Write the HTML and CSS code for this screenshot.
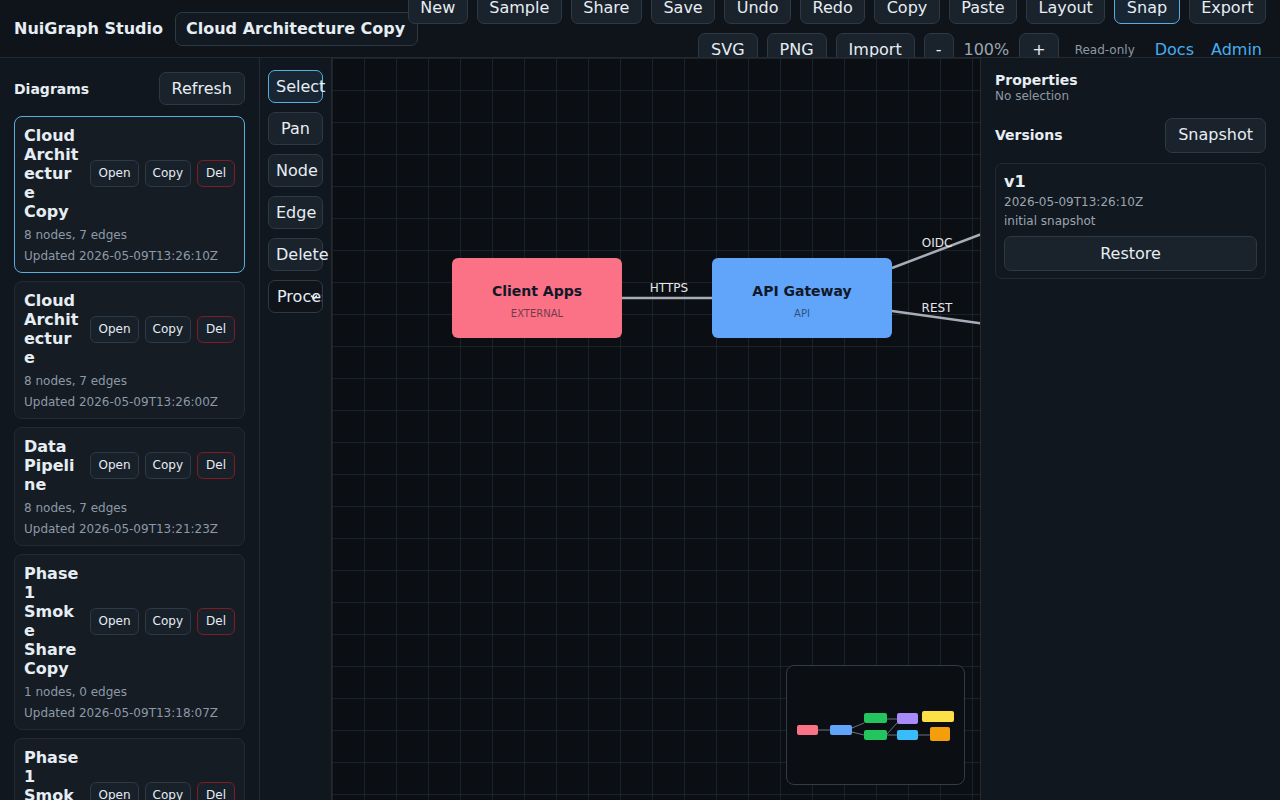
FILE: index.html
```html
<!DOCTYPE html>
<html lang="en">
<head>
<meta charset="utf-8">
<title>NuiGraph Studio</title>
<link rel="stylesheet" href="styles.css">
</head>
<body>
<header class="topbar">
  <div class="brand">NuiGraph Studio</div>
  <input class="title-input" type="text" value="Cloud Architecture Copy">
  <div class="toolbar">
    <div class="tb-row tb-main">
      <button class="btn">New</button>
      <button class="btn">Sample</button>
      <button class="btn">Share</button>
      <button class="btn">Save</button>
      <button class="btn">Undo</button>
      <button class="btn">Redo</button>
      <button class="btn">Copy</button>
      <button class="btn">Paste</button>
      <button class="btn">Layout</button>
      <button class="btn active">Snap</button>
      <button class="btn">Export</button>
    </div>
    <div class="tb-row">
      <button class="btn">SVG</button>
      <button class="btn">PNG</button>
      <button class="btn">Import</button>
      <button class="btn btn-zoom">-</button>
      <span class="zoom-val">100%</span>
      <button class="btn">+</button>
      <span class="readonly">Read-only</span>
      <a class="link link-docs">Docs</a>
      <a class="link">Admin</a>
    </div>
  </div>
</header>

<main class="workspace">
  <aside class="sidebar">
    <div class="side-head">
      <div class="side-title">Diagrams</div>
      <button class="btn">Refresh</button>
    </div>
    <div class="card-list">
      <div class="dcard selected">
        <div class="dcard-top">
          <div class="dcard-name">Cloud Architecture Copy</div>
          <div class="dcard-actions">
            <button class="sbtn">Open</button><button class="sbtn">Copy</button><button class="sbtn del">Del</button>
          </div>
        </div>
        <div class="meta">8 nodes, 7 edges</div>
        <div class="meta">Updated 2026-05-09T13:26:10Z</div>
      </div>
      <div class="dcard">
        <div class="dcard-top">
          <div class="dcard-name">Cloud Architecture</div>
          <div class="dcard-actions">
            <button class="sbtn">Open</button><button class="sbtn">Copy</button><button class="sbtn del">Del</button>
          </div>
        </div>
        <div class="meta">8 nodes, 7 edges</div>
        <div class="meta">Updated 2026-05-09T13:26:00Z</div>
      </div>
      <div class="dcard">
        <div class="dcard-top">
          <div class="dcard-name">Data Pipeline</div>
          <div class="dcard-actions">
            <button class="sbtn">Open</button><button class="sbtn">Copy</button><button class="sbtn del">Del</button>
          </div>
        </div>
        <div class="meta">8 nodes, 7 edges</div>
        <div class="meta">Updated 2026-05-09T13:21:23Z</div>
      </div>
      <div class="dcard">
        <div class="dcard-top">
          <div class="dcard-name">Phase 1 Smoke Share Copy</div>
          <div class="dcard-actions">
            <button class="sbtn">Open</button><button class="sbtn">Copy</button><button class="sbtn del">Del</button>
          </div>
        </div>
        <div class="meta">1 nodes, 0 edges</div>
        <div class="meta">Updated 2026-05-09T13:18:07Z</div>
      </div>
      <div class="dcard">
        <div class="dcard-top">
          <div class="dcard-name">Phase 1 Smoke Share</div>
          <div class="dcard-actions">
            <button class="sbtn">Open</button><button class="sbtn">Copy</button><button class="sbtn del">Del</button>
          </div>
        </div>
        <div class="meta">1 nodes, 0 edges</div>
        <div class="meta">Updated 2026-05-09T13:17:40Z</div>
      </div>
    </div>
  </aside>

  <nav class="tools">
    <button class="btn tool active">Select</button>
    <button class="btn tool">Pan</button>
    <button class="btn tool">Node</button>
    <button class="btn tool">Edge</button>
    <button class="btn tool">Delete</button>
    <div class="tool-select">
      <span class="tool-select-text">Process</span>
      <svg class="chev" width="8" height="6" viewBox="0 0 8 6"><path d="M1 1.5 L4 4.5 L7 1.5" fill="none" stroke="#e6edf3" stroke-width="1.6"/></svg>
    </div>
  </nav>

  <section class="canvas">
    <svg class="edges" width="648" height="742" viewBox="0 0 648 742">
      <g stroke="#a7adb7" stroke-width="2.5" fill="none">
        <line x1="290" y1="240" x2="380" y2="240"/>
        <line x1="560" y1="210" x2="660" y2="172"/>
        <line x1="560" y1="253" x2="660" y2="267"/>
      </g>
      <g fill="#e5e7eb" font-family="DejaVu Sans, sans-serif" font-size="12" text-anchor="middle">
        <text x="337" y="234">HTTPS</text>
        <text x="605" y="189">OIDC</text>
        <text x="605" y="254">REST</text>
      </g>
    </svg>
    <div class="node node-client">
      <div class="node-title">Client Apps</div>
      <div class="node-sub">EXTERNAL</div>
    </div>
    <div class="node node-api">
      <div class="node-title">API Gateway</div>
      <div class="node-sub">API</div>
    </div>
    <div class="minimap">
      <svg width="178" height="119" viewBox="0 0 178 119">
        <g stroke="#6b7280" stroke-width="1">
          <line x1="31" y1="64" x2="43" y2="64"/>
          <line x1="65" y1="62" x2="77" y2="57"/>
          <line x1="65" y1="66" x2="77" y2="69"/>
          <line x1="100" y1="53" x2="110" y2="53"/>
          <line x1="100" y1="68" x2="110" y2="57"/>
          <line x1="100" y1="69" x2="110" y2="69"/>
          <line x1="131" y1="69" x2="143" y2="69"/>
        </g>
        <rect x="10" y="59" width="21" height="10" rx="2" fill="#fb7185"/>
        <rect x="43" y="59" width="22" height="10" rx="2" fill="#60a5fa"/>
        <rect x="77" y="47" width="23" height="10" rx="2" fill="#22c55e"/>
        <rect x="77" y="64" width="23" height="10" rx="2" fill="#22c55e"/>
        <rect x="110" y="47" width="21" height="11" rx="2" fill="#a78bfa"/>
        <rect x="110" y="64" width="21" height="10" rx="2" fill="#38bdf8"/>
        <rect x="135" y="45" width="32" height="11" rx="2" fill="#fde047"/>
        <rect x="143" y="61" width="20" height="14" rx="2" fill="#f59e0b"/>
      </svg>
    </div>
  </section>

  <aside class="inspector">
    <div class="insp-title">Properties</div>
    <div class="insp-sub">No selection</div>
    <div class="insp-head">
      <div class="insp-title">Versions</div>
      <button class="btn">Snapshot</button>
    </div>
    <div class="vcard">
      <div class="vname">v1</div>
      <div class="vmeta">2026-05-09T13:26:10Z</div>
      <div class="vmeta vnote">initial snapshot</div>
      <button class="btn btn-block">Restore</button>
    </div>
  </aside>
</main>
</body>
</html>
```

FILE: styles.css
```css
* { box-sizing: border-box; }

html, body {
  margin: 0;
  height: 100%;
}

body {
  background: #0b0e13;
  color: #e6edf3;
  font-family: "DejaVu Sans", sans-serif;
  overflow: hidden;
}

button {
  font-family: inherit;
}

.btn {
  background: #1a222b;
  border: 1px solid #2e3946;
  border-radius: 7px;
  color: #e6edf3;
  font-size: 16px;
  line-height: 19px;
  padding: 6px 12px;
  white-space: nowrap;
  flex: none;
}

.btn.active {
  border-color: #5aaede;
  background: #182634;
}

/* Header */
.topbar {
  height: 58px;
  display: flex;
  align-items: center;
  gap: 12px;
  padding: 0 14px;
  background: #0f141a;
  border-bottom: 1px solid #222a33;
  overflow: hidden;
}

.brand {
  font-weight: bold;
  font-size: 16px;
  white-space: nowrap;
  flex: none;
}

.title-input {
  flex: none;
  width: 243px;
  height: 34px;
  background: #121920;
  border: 1px solid #2e3946;
  border-radius: 7px;
  color: #e6edf3;
  font-family: inherit;
  font-weight: bold;
  font-size: 16px;
  padding: 0 10px;
  outline: none;
}

.toolbar {
  flex: 1;
  min-width: 0;
  display: flex;
  flex-direction: column;
  gap: 9px;
}

.tb-row {
  display: flex;
  justify-content: flex-end;
  align-items: center;
  gap: 9px;
}

.tb-main .btn {
  padding: 6px 11.5px;
}

.btn-zoom {
  padding: 6px 11px;
}

.zoom-val {
  font-size: 16px;
  color: #9aa5b1;
  margin: 0 1px;
}

.readonly {
  font-size: 12px;
  color: #8d99a6;
  margin-left: 7px;
}

.link {
  color: #46aef0;
  font-size: 16px;
  padding: 0 4px;
}

.link-docs {
  margin-left: 7px;
}

/* Layout */
.workspace {
  display: flex;
  height: calc(100% - 58px);
}

.sidebar {
  width: 260px;
  flex: none;
  background: #11171e;
  border-right: 1px solid #222a33;
  padding: 14px;
  overflow: hidden;
}

.side-head {
  display: flex;
  justify-content: space-between;
  align-items: center;
}

.side-title {
  font-weight: bold;
  font-size: 14px;
}

.card-list {
  margin-top: 11px;
  display: flex;
  flex-direction: column;
  gap: 8px;
}

.dcard {
  background: #151c24;
  border: 1px solid #222b35;
  border-radius: 8px;
  padding: 9px 9px 8px;
}

.dcard.selected {
  border-color: #5aaede;
}

.dcard-top {
  display: flex;
  align-items: center;
  gap: 10px;
}

.dcard-name {
  flex: 1;
  min-width: 0;
  font-weight: bold;
  font-size: 16px;
  line-height: 19px;
  overflow-wrap: anywhere;
}

.dcard-actions {
  flex: none;
  display: flex;
  gap: 6px;
}

.sbtn {
  background: #18202a;
  border: 1px solid #2e3946;
  border-radius: 6px;
  color: #e6edf3;
  font-size: 12px;
  line-height: 15px;
  padding: 5px 7px;
}

.sbtn.del {
  border-color: #7f1d24;
  min-width: 38px;
}

.meta {
  font-size: 12px;
  line-height: 16px;
  color: #8d99a6;
  margin-top: 6px;
}

.meta + .meta {
  margin-top: 5px;
}

/* Tools column */
.tools {
  width: 72px;
  flex: none;
  background: #11171e;
  border-right: 1px solid #222a33;
  padding: 12px 8px;
  display: flex;
  flex-direction: column;
  gap: 9px;
}

.tool {
  width: 55px;
  padding: 6px 7px;
  text-align: center;
  overflow: visible;
}

.tool-select {
  position: relative;
  width: 55px;
  height: 33px;
  background: #0e141a;
  border: 1px solid #2e3946;
  border-radius: 7px;
  overflow: hidden;
  font-size: 16px;
  line-height: 31px;
  padding-left: 8px;
  white-space: nowrap;
}

.chev {
  position: absolute;
  right: 4px;
  top: 13px;
}

/* Canvas */
.canvas {
  position: relative;
  flex: 1;
  min-width: 0;
  overflow: hidden;
  background-color: #0b0e13;
  background-image:
    linear-gradient(to right, #1c222a 1px, transparent 1px),
    linear-gradient(to bottom, #1c222a 1px, transparent 1px);
  background-size: 32px 32px;
  background-position: 0 0;
}

.edges {
  position: absolute;
  left: 0;
  top: 0;
}

.node {
  position: absolute;
  height: 80px;
  border-radius: 6px;
  padding-top: 7px;
  display: flex;
  flex-direction: column;
  align-items: center;
  justify-content: center;
  color: #111827;
}

.node-client {
  left: 120px;
  top: 200px;
  width: 170px;
  background: #fb7185;
}

.node-api {
  left: 380px;
  top: 200px;
  width: 180px;
  background: #60a5fa;
}

.node-title {
  font-weight: bold;
  font-size: 14px;
  line-height: 17px;
}

.node-sub {
  font-size: 10px;
  line-height: 12px;
  margin-top: 8px;
  opacity: 0.6;
}

.minimap {
  position: absolute;
  right: 15px;
  bottom: 15px;
  width: 179px;
  height: 120px;
  background: #0b0e13;
  border: 1px solid #343b45;
  border-radius: 8px;
  overflow: hidden;
}

.minimap svg {
  display: block;
}

/* Inspector */
.inspector {
  width: 300px;
  flex: none;
  background: #11171e;
  border-left: 1px solid #222a33;
  padding: 14px;
}

.insp-title {
  font-weight: bold;
  font-size: 14px;
  line-height: 17px;
}

.insp-sub {
  font-size: 12px;
  line-height: 14px;
  color: #8d99a6;
}

.insp-head {
  margin-top: 15px;
  display: flex;
  justify-content: space-between;
  align-items: center;
}

.insp-head .btn {
  padding: 6px 12px 8px;
}

.vcard {
  margin-top: 10px;
  border: 1px solid #222b35;
  border-radius: 7px;
  padding: 8px 8px 7px;
  background: #12181f;
}

.vname {
  font-weight: bold;
  font-size: 16px;
  line-height: 19px;
}

.vmeta {
  font-size: 12px;
  line-height: 16px;
  color: #9aa5b1;
  margin-top: 3px;
}

.vnote {
  margin-top: 3px;
}

.btn-block {
  display: block;
  width: 100%;
  margin-top: 7px;
  padding: 7px 12px 7px;
}
```
